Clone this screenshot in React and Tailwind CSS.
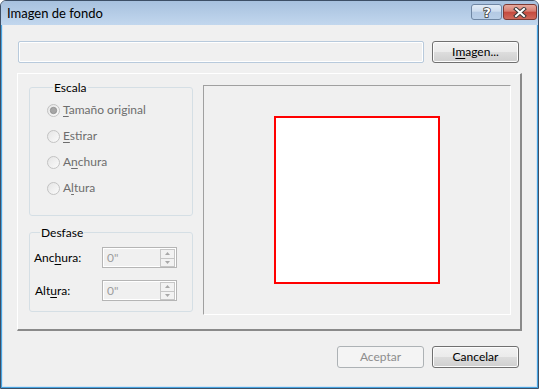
import React from "react";

const Radio = ({ checked }) => (
  <svg width="13" height="13" viewBox="0 0 13 13" className="shrink-0">
    <defs>
      <linearGradient id="rg" x1="0" y1="0" x2="1" y2="1">
        <stop offset="0" stopColor="#e4e4e4" />
        <stop offset="1" stopColor="#fbfbfb" />
      </linearGradient>
    </defs>
    <circle cx="6.5" cy="6.5" r="6" fill="url(#rg)" stroke="#c2c2c2" />
    {checked && <circle cx="6.5" cy="6.5" r="3.2" fill="#a6a6a6" stroke="#8c8c8c" strokeWidth="0.8" />}
  </svg>
);

const Key = ({ children }) => <span className="underline underline-offset-2 decoration-1">{children}</span>;

const Spin = () => (
  <div className="flex w-[75px] h-[21px] border border-[#b5b5b5] bg-[#f0f0f0] shadow-[inset_0_0_0_1px_#ffffff]">
    <div className="flex-1 pl-[4px] leading-[19px] text-[#9d9d9d]">0"</div>
    <div className="flex flex-col w-[16px] pt-[1px] pr-[1px]">
      <div className="h-[10px] border border-[#c6c6c6] bg-[#f2f2f2] flex items-center justify-center">
        <svg width="5" height="3" viewBox="0 0 5 3"><path d="M0 3 L2.5 0 L5 3 Z" fill="#a8a8a8" /></svg>
      </div>
      <div className="h-[9px] border border-t-0 border-[#c6c6c6] bg-[#f2f2f2] flex items-center justify-center">
        <svg width="5" height="3" viewBox="0 0 5 3"><path d="M0 0 L2.5 3 L5 0 Z" fill="#a8a8a8" /></svg>
      </div>
    </div>
  </div>
);

const Button = ({ children, disabled }) => (
  <div
    className={
      disabled
        ? "w-[87px] h-[22px] rounded-[3px] border border-[#adb2b5] bg-[#f4f4f4] text-[#8d8d8d] flex items-center justify-center"
        : "w-[87px] h-[22px] rounded-[3px] border border-[#707070] bg-[linear-gradient(to_bottom,#f2f2f2_0%,#ebebeb_50%,#dddddd_50%,#cfcfcf_100%)] shadow-[inset_0_0_0_1px_#fcfcfc] text-black flex items-center justify-center"
    }
  >
    {children}
  </div>
);

export default function App() {
  return (
    <div className="w-[539px] h-[389px] border border-[#3d4f66] rounded-t-[6px] overflow-hidden flex flex-col bg-[#bfd5ec] font-['Lato','Noto_Sans',sans-serif] text-[12px] text-black">
      {/* title bar */}
      <div className="h-[24px] shrink-0 flex items-start justify-between bg-[linear-gradient(to_bottom,#a7c1de,#c2d7ee)]">
        <div className="pl-[6px] pt-[4px] text-[13px] leading-[16px] text-black">Imagen de fondo</div>
        <div className="flex pt-[3px] pr-[1px] gap-[1px]">
          <div className="w-[31px] h-[16px] rounded-[3px] border border-[#6f86a3] bg-[linear-gradient(to_bottom,#e2ecf7_0%,#cddcee_45%,#b4c9e3_50%,#b9cfe8_100%)] flex items-center justify-center">
            <svg width="12" height="14" viewBox="0 0 12 14">
              <text x="6" y="12" textAnchor="middle" fontFamily="DejaVu Sans, sans-serif" fontWeight="bold" fontSize="13" fill="#ffffff" stroke="#3a3a3a" strokeWidth="1.6" paintOrder="stroke">?</text>
            </svg>
          </div>
          <div className="w-[34px] h-[16px] rounded-[3px] border border-[#7d3a33] bg-[linear-gradient(to_bottom,#e6aa9e_0%,#d77d70_45%,#c5493d_50%,#cf6a5c_100%)] flex items-center justify-center">
            <svg width="14" height="11" viewBox="0 0 14 11">
              <path d="M3 2 L11 9 M11 2 L3 9" stroke="#3a3a3a" strokeWidth="4" strokeLinecap="square" />
              <path d="M3 2 L11 9 M11 2 L3 9" stroke="#ffffff" strokeWidth="2" strokeLinecap="square" />
            </svg>
          </div>
        </div>
      </div>

      {/* frame edges */}
      <div className="flex-1 flex flex-col bg-[#47a4e0] px-[1px] pb-[1px]">
        <div className="flex-1 flex flex-col bg-[#d4e4f4] px-[1px] pb-[1px]">
          <div className="flex-1 bg-[#f0f0f0] flex flex-col">
            {/* path row */}
            <div className="flex gap-[8px] pl-[15px] mt-[16px]">
              <div className="w-[406px] h-[22px] rounded-[2px] border border-[#b8cadc] bg-[#f0f0f0] shadow-[inset_0_0_0_1px_#ffffff]" />
              <Button>
                <span>
                  I<Key>m</Key>agen...
                </span>
              </Button>
            </div>

            {/* main frame */}
            <div className="ml-[14px] mt-[10px] w-[505px] h-[258px] border-t border-l border-t-white border-l-white border-r-2 border-b-2 border-r-[#8a8a8a] border-b-[#8a8a8a] flex items-start pl-[11px] pt-[6px] gap-[10px]">
              <div className="w-[164px] flex flex-col">
                <fieldset className="border border-[#d5dfe5] rounded-[3px] pl-[17px] pt-[2px] pb-[14px]">
                  <legend className="ml-[6px] px-[1px] leading-[15px]">Escala</legend>
                  <div className="flex flex-col text-[#6d6d6d]">
                    <div className="h-[26px] flex items-center gap-[3px]">
                      <Radio checked />
                      <span><Key>T</Key>amaño original</span>
                    </div>
                    <div className="h-[26px] flex items-center gap-[3px]">
                      <Radio />
                      <span><Key>E</Key>stirar</span>
                    </div>
                    <div className="h-[26px] flex items-center gap-[3px]">
                      <Radio />
                      <span>A<Key>n</Key>chura</span>
                    </div>
                    <div className="h-[26px] flex items-center gap-[3px]">
                      <Radio />
                      <span>A<Key>l</Key>tura</span>
                    </div>
                  </div>
                </fieldset>
                <fieldset className="mt-[9px] border border-[#d5dfe5] rounded-[3px] pl-[4px] pt-[7px] pb-[10px]">
                  <legend className="ml-[6px] px-[1px] leading-[15px]">Desfase</legend>
                  <div className="flex flex-col gap-[12px]">
                    <div className="flex items-center">
                      <span className="w-[68px]">Anc<Key>h</Key>ura:</span>
                      <Spin />
                    </div>
                    <div className="flex items-center">
                      <span className="w-[68px] pl-[1px]">Alt<Key>u</Key>ra:</span>
                      <Spin />
                    </div>
                  </div>
                </fieldset>
              </div>

              <div className="mt-[5px] w-[308px] h-[230px] border-t border-l border-t-[#a0a0a0] border-l-[#a0a0a0] border-r border-b border-r-white border-b-white flex items-center justify-center">
                <div className="w-[166px] h-[168px] border-2 border-[#ff0000] bg-white" />
              </div>
            </div>

            {/* bottom buttons */}
            <div className="flex justify-end gap-[8px] pr-[17px] mt-[15px]">
              <Button disabled>Aceptar</Button>
              <Button>Cancelar</Button>
            </div>
          </div>
        </div>
      </div>
    </div>
  );
}
